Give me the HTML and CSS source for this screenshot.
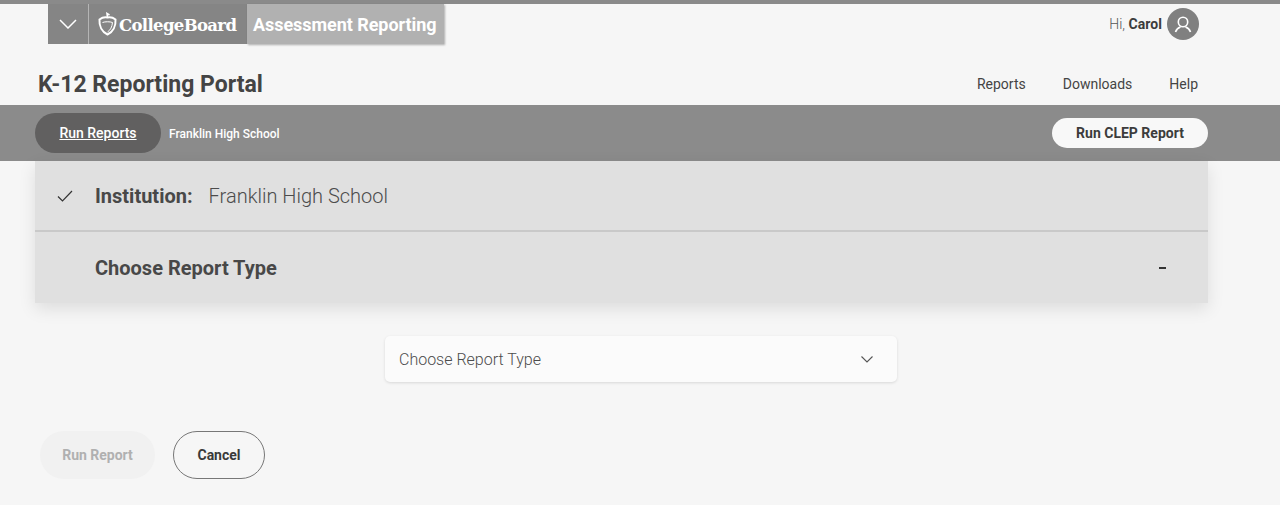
FILE: index.html
```html
<!DOCTYPE html>
<html lang="en">
<head>
    <meta charset="UTF-8">
    <meta name="viewport" content="width=device-width, initial-scale=1.0">
    <title>K-12 Reporting Portal</title>
    <link rel="stylesheet" href="styles.css">
</head>
<body>
    <header class="global-header">
        <div class="brand">
            <button class="brand-toggle" aria-label="Menu">
                <svg width="18" height="10" viewBox="0 0 18 10"><path d="M1 1l8 8 8-8" fill="none" stroke="#fff" stroke-width="1.5"/></svg>
            </button>
            <div class="brand-logo">
                <svg class="acorn" width="20" height="24" viewBox="0 0 20 24">
                    <path d="M1.500 7.500C4 5.500 7 5 9.500 5.500 12 5 15 5.500 17.500 7.500 18 14 15 20 9.500 22.500 4 20 1 14 1.500 7.500z" fill="none" stroke="#fff" stroke-width="2"/>
                    <path d="M4.500 10.500C7 9.500 12 9.500 14.500 10.500 14 15 12.500 18 9.500 20" fill="none" stroke="#fff" stroke-width="1"/>
                    <path d="M9.500 5.500L9 1.500 11.500 3" fill="none" stroke="#fff" stroke-width="1.600"/>
                </svg>
                <span class="brand-name">CollegeBoard</span>
            </div>
            <div class="brand-program">Assessment Reporting</div>
        </div>
        <div class="user">
            <span class="user-hi">Hi, <b>Carol</b></span>
            <span class="avatar">
                <svg width="20" height="20" viewBox="0 0 20 20">
                    <circle cx="10" cy="8" r="4.700" fill="none" stroke="#fff" stroke-width="1.600"/>
                    <path d="M2.500 18C3.500 15 6 13.500 7.500 13M17.500 18C16.500 15 14 13.500 12.500 13" fill="none" stroke="#fff" stroke-width="1.600"/>
                </svg>
            </span>
        </div>
    </header>

    <div class="title-row">
        <h1>K-12 Reporting Portal</h1>
        <nav class="main-nav">
            <a href="#">Reports</a>
            <a href="#">Downloads</a>
            <a href="#">Help</a>
        </nav>
    </div>

    <div class="subnav">
        <a class="subnav-pill" href="#">Run Reports</a>
        <span class="subnav-school">Franklin High School</span>
        <button class="clep-btn">Run CLEP Report</button>
    </div>

    <main class="content">
        <section class="steps">
            <div class="step step-done">
                <svg class="step-check" width="16" height="12" viewBox="0 0 16 12"><path d="M1 6.500l4.500 4.500L15 1" fill="none" stroke="#333" stroke-width="1.200"/></svg>
                <span class="step-label">Institution:</span>
                <span class="step-value">Franklin High School</span>
            </div>
            <div class="step step-open">
                <span class="step-label">Choose Report Type</span>
                <span class="step-toggle"></span>
            </div>
        </section>

        <div class="select-wrap">
            <div class="select">
                <span>Choose Report Type</span>
                <svg width="12" height="7" viewBox="0 0 12 7"><path d="M.5.5l5.500 5.500L11.500.5" fill="none" stroke="#555" stroke-width="1.100"/></svg>
            </div>
        </div>

        <div class="actions">
            <button class="btn btn-disabled">Run Report</button>
            <button class="btn btn-outline">Cancel</button>
        </div>
    </main>
</body>
</html>
```

FILE: styles.css
```css
* {
    margin: 0;
    padding: 0;
    box-sizing: border-box;
    font-family: 'Roboto', sans-serif;
}

body {
    background: #f6f6f6;
    color: #444;
    height: 505px;
    overflow: hidden;
}

button {
    border: none;
    background: none;
    cursor: pointer;
}

a {
    color: inherit;
    text-decoration: none;
}

/* Global header */
.global-header {
    height: 44px;
    border-top: 4px solid #8a8a8a;
    padding: 0 81px 0 48px;
    display: flex;
    justify-content: space-between;
    align-items: center;
}

.brand {
    display: flex;
    height: 40px;
    background: #858585;
    color: #fff;
}

.brand-toggle {
    width: 41px;
    border-right: 1px solid #b5b5b5;
    display: flex;
    align-items: center;
    justify-content: center;
}

.brand-logo {
    width: 158px;
    padding-left: 9px;
    display: flex;
    align-items: center;
    gap: 1px;
}

.acorn {
    flex: none;
}

.brand-name {
    font-family: 'DejaVu Serif', serif;
    font-weight: 700;
    font-size: 16.500px;
    letter-spacing: -0.650px;
    color: #fff;
    padding-top: 2px;
}

.brand-program {
    width: 197px;
    background: #b1b1b1;
    box-shadow: 1px 1px 2px rgba(0, 0, 0, 0.3);
    font-size: 18px;
    font-weight: 700;
    letter-spacing: -0.050px;
    color: #fff;
    display: flex;
    align-items: center;
    padding-left: 6px;
}

.user {
    display: flex;
    align-items: center;
    gap: 5px;
}

.user-hi {
    font-size: 14px;
    font-weight: 300;
    color: #555;
    letter-spacing: 0.050px;
}

.user-hi b {
    font-weight: 700;
    color: #3c3c3c;
}

.avatar {
    width: 32px;
    height: 32px;
    border-radius: 50%;
    background: #808080;
    display: flex;
    align-items: center;
    justify-content: center;
}

/* Title row */
.title-row {
    height: 61px;
    padding: 19px 82px 0 38px;
    display: flex;
    justify-content: space-between;
    align-items: center;
}

.title-row h1 {
    font-size: 23px;
    font-weight: 700;
    color: #444;
}

.main-nav {
    display: flex;
    gap: 37px;
    font-size: 14px;
    color: #444;
}

/* Grey bar under the title */
.subnav {
    height: 56px;
    background: #8b8b8b;
    padding: 0 72px 0 35px;
    display: flex;
    align-items: center;
    color: #fff;
}

.subnav-pill {
    width: 126px;
    height: 40px;
    border-radius: 20px;
    background: #616060;
    font-size: 14px;
    font-weight: 500;
    text-decoration: underline;
    display: flex;
    align-items: center;
    justify-content: center;
}

.subnav-school {
    margin-left: 8px;
    font-size: 12px;
    font-weight: 500;
    padding-top: 1px;
}

.clep-btn {
    margin-left: auto;
    width: 156px;
    height: 30px;
    border-radius: 15px;
    background: #f8f8f8;
    font-size: 14px;
    font-weight: 700;
    color: #3c3c3c;
}

/* Steps card */
.steps {
    margin: 0 72px 0 35px;
    background: #e0e0e0;
    box-shadow: 0 6px 16px rgba(0, 0, 0, 0.1);
}

.step {
    display: flex;
    align-items: center;
    padding-left: 60px;
    position: relative;
}

.step-done {
    height: 69px;
    padding-top: 1px;
}

.step-open {
    height: 73px;
    border-top: 2px solid #c9c9c9;
}

.step-check {
    position: absolute;
    left: 22px;
    top: 29px;
}

.step-label {
    font-size: 20px;
    font-weight: 700;
    color: #484848;
}

.step-value {
    margin-left: 16px;
    font-size: 20px;
    font-weight: 300;
    color: #4c4c4c;
}

.step-toggle {
    margin-left: auto;
    margin-right: 42px;
    width: 7px;
    height: 2px;
    background: #333;
}

/* Report type select */
.select-wrap {
    display: flex;
    justify-content: center;
    margin-top: 33px;
    padding-left: 2px;
}

.select {
    width: 512px;
    height: 46px;
    background: #fbfbfb;
    border-radius: 5px;
    box-shadow: 0 1px 3px rgba(0, 0, 0, 0.12);
    padding: 0 24px 0 14px;
    display: flex;
    justify-content: space-between;
    align-items: center;
    font-size: 16px;
    font-weight: 300;
    color: #4c4c4c;
}

/* Bottom buttons */
.actions {
    margin-top: 49px;
    padding-left: 40px;
    display: flex;
    align-items: center;
    gap: 18px;
}

.btn {
    height: 48px;
    border-radius: 24px;
    font-size: 14px;
    font-weight: 700;
}

.btn-disabled {
    width: 115px;
    background: #f1f1f1;
    color: #b0b0b0;
}

.btn-outline {
    width: 92px;
    border: 1px solid #777;
    color: #3a3a3a;
}
```
